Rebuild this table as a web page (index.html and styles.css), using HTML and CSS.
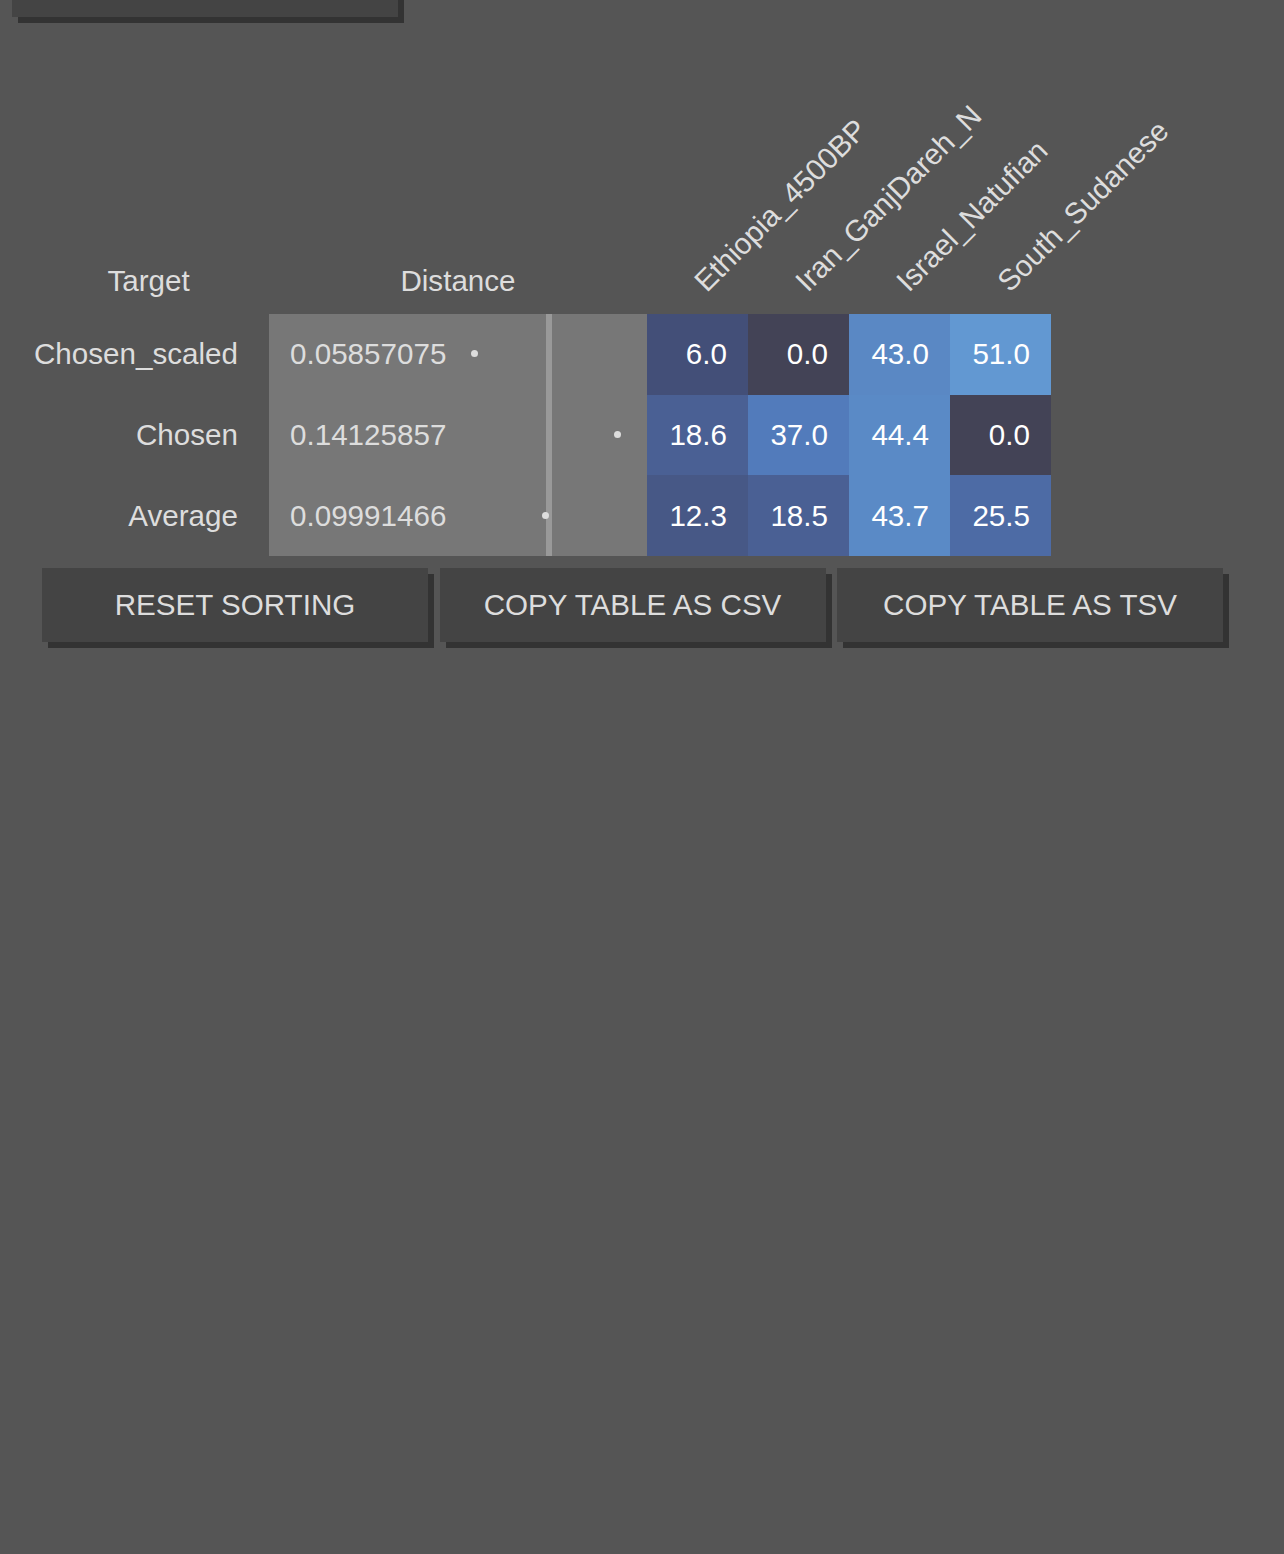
FILE: index.html
```html
<!DOCTYPE html>
<html>
<head>
<meta charset="utf-8">
<link rel="stylesheet" href="styles.css">
</head>
<body>
<div class="top-row">
  <button class="btn top-btn" type="button" aria-label="Options"></button>
</div>
<table class="mix">
  <thead>
    <tr>
      <th class="h-target">Target</th>
      <th class="h-dist">Distance</th>
      <th class="h-pop"><span class="rot">Ethiopia_4500BP</span></th>
      <th class="h-pop"><span class="rot">Iran_GanjDareh_N</span></th>
      <th class="h-pop"><span class="rot">Israel_Natufian</span></th>
      <th class="h-pop"><span class="rot">South_Sudanese</span></th>
    </tr>
  </thead>
  <tbody>
    <tr>
      <td class="name">Chosen_scaled</td>
      <td class="dist">0.05857075<span class="bar"></span><span class="dot" style="left:202px"></span></td>
      <td class="val" style="background:#434f78">6.0</td>
      <td class="val" style="background:#434356">0.0</td>
      <td class="val" style="background:#5a88c4">43.0</td>
      <td class="val" style="background:#6298d2">51.0</td>
    </tr>
    <tr>
      <td class="name">Chosen</td>
      <td class="dist">0.14125857<span class="bar"></span><span class="dot" style="left:345px"></span></td>
      <td class="val" style="background:#4a6094">18.6</td>
      <td class="val" style="background:#527bbb">37.0</td>
      <td class="val" style="background:#5a8ac6">44.4</td>
      <td class="val" style="background:#434356">0.0</td>
    </tr>
    <tr>
      <td class="name">Average</td>
      <td class="dist">0.09991466<span class="bar"></span><span class="dot" style="left:273px"></span></td>
      <td class="val" style="background:#475886">12.3</td>
      <td class="val" style="background:#4a6094">18.5</td>
      <td class="val" style="background:#5a8ac6">43.7</td>
      <td class="val" style="background:#4d6ba5">25.5</td>
    </tr>
  </tbody>
</table>
<div class="actions">
  <button class="btn" type="button">RESET SORTING</button>
  <button class="btn" type="button">COPY TABLE AS CSV</button>
  <button class="btn" type="button">COPY TABLE AS TSV</button>
</div>
</body>
</html>
```
FILE: styles.css
```css
html, body {
  margin: 0;
  padding: 0;
  background: #555555;
}
body {
  font-family: "Liberation Sans", Arial, sans-serif;
  font-size: 29.6px;
  color: #dddddd;
  height: 1554px;
  overflow: hidden;
}
.btn {
  font-family: "Liberation Sans", Arial, sans-serif;
  font-size: 29.6px;
  color: #dddddd;
  background: #444444;
  border: none;
  width: 386px;
  height: 74px;
  padding: 0;
  box-shadow: 6px 6px 0 #333333;
  flex: none;
}
.top-row {
  display: flex;
  padding-left: 12px;
  margin-top: -57px;
}
.mix {
  border-collapse: collapse;
  border-spacing: 0;
  margin-top: 77px;
  margin-left: 28px;
}
.mix th {
  font-weight: normal;
  height: 204px;
  vertical-align: bottom;
  padding: 0 0 16px 0;
  text-align: center;
  color: #dddddd;
}
.h-target { width: 241px; }
.h-dist { width: 378px; }
.h-pop {
  width: 101px;
  position: relative;
}
.rot {
  position: absolute;
  left: 63px;
  bottom: 17px;
  line-height: 1;
  white-space: nowrap;
  transform-origin: 0 100%;
  transform: rotate(-45deg);
}
.mix td {
  height: 80.67px;
  padding: 0;
  box-sizing: border-box;
}
.name {
  text-align: right;
  padding-right: 31px !important;
  color: #dddddd;
}
.dist {
  background: #777777;
  position: relative;
  padding-left: 21px !important;
  color: #dddddd;
}
.bar {
  position: absolute;
  left: 277px;
  top: 0;
  bottom: 0;
  width: 6px;
  background: #999999;
}
.dot {
  position: absolute;
  top: 50%;
  width: 7px;
  height: 7px;
  margin-top: -4px;
  border-radius: 50%;
  background: #dddddd;
}
.val {
  text-align: right;
  padding-right: 21px !important;
  color: #ffffff;
}
.actions {
  display: flex;
  gap: 11.5px;
  margin-top: 12px;
  margin-left: 42px;
}
```
